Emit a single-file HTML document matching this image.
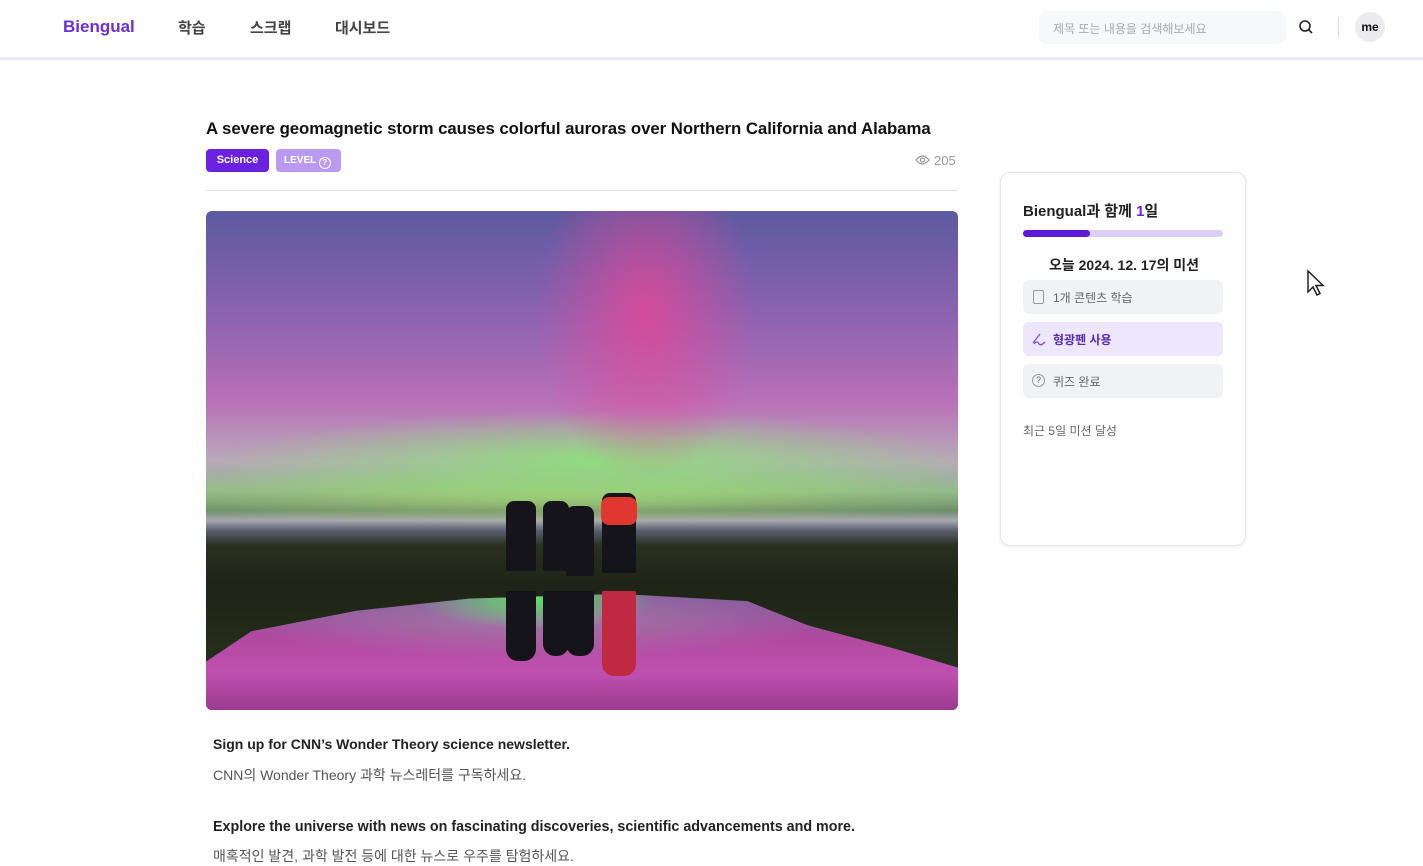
<!DOCTYPE html>
<html><head><meta charset="utf-8"><style>
*{margin:0;padding:0;box-sizing:border-box}
body{width:1423px;height:860px;overflow:hidden;background:#fff;font-family:"Liberation Sans","Noto Sans CJK KR",sans-serif;position:relative;color:#111}
.hdr{position:absolute;left:0;top:0;width:1423px;height:60px;background:#fff;border-bottom:3px solid #ece8f7}
.abs{position:absolute;white-space:nowrap}
.nav{font-size:15px;color:#444;font-weight:bold;top:17px}
.img{position:absolute;left:206px;top:211px;width:752px;height:499px;border-radius:6px;overflow:hidden;
background:
radial-gradient(ellipse 110px 170px at 440px 100px,rgba(230,70,150,.8),transparent),
radial-gradient(ellipse 380px 50px at 390px 250px,rgba(140,225,120,.9),transparent),
radial-gradient(ellipse 500px 30px at 350px 285px,rgba(170,210,110,.7),transparent),
linear-gradient(180deg,#5c5aa0 0%,#8a62b0 20%,#b870b8 38%,#b8a8b8 50%,#90b890 56%,#6a8a6a 60%,#a8a8b0 62%,#5a6070 64%,#2a3020 67%,#1e2416 75%,#2a3420 100%)}
.refl{position:absolute;left:0;top:378px;width:752px;height:121px;
background:radial-gradient(ellipse 120px 30px at 330px 10px,rgba(90,230,100,.95),transparent),radial-gradient(ellipse 300px 40px at 330px 30px,rgba(160,140,170,.7),transparent),linear-gradient(180deg,#7a5a9a,#b04aa0 40%,#c050b0 70%,#9a3a90);
clip-path:polygon(0 60%,6% 35%,20% 18%,35% 8%,55% 4%,72% 10%,80% 30%,92% 50%,100% 65%,100% 100%,0 100%)}
.p{position:absolute;background:#14141a;border-radius:8px 8px 2px 2px}
.card{position:absolute;left:1000px;top:172px;width:246px;height:374px;border:1px solid #e6e6ea;border-radius:10px;box-shadow:0 1px 4px rgba(0,0,0,.08);background:#fff}
.m{position:absolute;left:22px;width:200px;height:34px;border-radius:6px;background:#f1f2f4;font-size:12px;color:#666;padding:9px 0 0 30px}
</style></head><body>
<div class="hdr"></div>
<div class="abs" style="left:63px;top:17px;font-size:17px;font-weight:bold;color:#6a2fd8">Biengual</div>
<div class="abs nav" style="left:178px">학습</div>
<div class="abs nav" style="left:250px">스크랩</div>
<div class="abs nav" style="left:335px">대시보드</div>
<div class="abs" style="left:1039px;top:11px;width:247px;height:33px;background:#f7f8fa;border-radius:8px;font-size:12px;color:#aaa;padding:9px 0 0 14px">제목 또는 내용을 검색해보세요</div>
<svg class="abs" style="left:1298px;top:19px" width="16" height="16" viewBox="0 0 16 16"><circle cx="7" cy="7" r="5" fill="none" stroke="#222" stroke-width="1.6"/><path d="M11 11l3 3" stroke="#222" stroke-width="1.6"/></svg>
<div class="abs" style="left:1338px;top:17px;width:1px;height:20px;background:#ddd"></div>
<div class="abs" style="left:1355px;top:12px;width:30px;height:30px;border-radius:50%;background:#ececef;font-size:12px;font-weight:bold;text-align:center;line-height:30px">me</div>

<div class="abs" style="left:206px;top:119px;font-size:16.8px;font-weight:bold;letter-spacing:-0.05px">A severe geomagnetic storm causes colorful auroras over Northern California and Alabama</div>
<div class="abs" style="left:206px;top:149px;width:63px;height:23px;background:#6a22e0;border-radius:4px;color:#fff;font-size:11px;font-weight:bold;text-align:center;line-height:23px">Science</div>
<div class="abs" style="left:276px;top:149px;width:65px;height:23px;background:#b99af0;border-radius:4px;color:#fff;font-size:10px;font-weight:bold;line-height:23px;padding-left:8px">LEVEL <span style="display:inline-block;width:12px;height:12px;border:1.3px solid #fff;border-radius:50%;font-size:8px;line-height:10px;text-align:center;vertical-align:-2px">?</span></div>
<svg class="abs" style="left:915px;top:154px" width="15" height="12" viewBox="0 0 15 12"><path d="M1 6Q7.5-2 14 6Q7.5 14 1 6z" fill="none" stroke="#999" stroke-width="1.2"/><circle cx="7.5" cy="6" r="2" fill="none" stroke="#999" stroke-width="1.2"/></svg>
<div class="abs" style="left:934px;top:153px;font-size:13px;color:#999">205</div>
<div class="abs" style="left:206px;top:190px;width:752px;height:1px;background:#e2e2e2"></div>
<div class="img"><div class="refl"></div>
<div class="p" style="left:300px;top:290px;width:30px;height:70px"></div>
<div class="p" style="left:337px;top:290px;width:26px;height:70px"></div>
<div class="p" style="left:360px;top:295px;width:28px;height:70px"></div>
<div class="p" style="left:396px;top:282px;width:34px;height:80px"></div>
<div style="position:absolute;left:395px;top:286px;width:36px;height:28px;background:#e03830;border-radius:8px"></div>
<div class="p" style="left:300px;top:380px;width:30px;height:70px;border-radius:2px 2px 12px 12px"></div>
<div class="p" style="left:337px;top:380px;width:26px;height:65px;border-radius:2px 2px 12px 12px"></div>
<div class="p" style="left:360px;top:380px;width:28px;height:65px;border-radius:2px 2px 12px 12px"></div>
<div class="p" style="left:396px;top:380px;width:34px;height:85px;border-radius:2px 2px 12px 12px;background:#c02a40"></div>
</div>

<div class="card">
<div class="abs" style="left:22px;top:27px;font-size:15px;font-weight:bold;color:#222">Biengual과 함께 <span style="color:#6a22e0">1</span>일</div>
<div class="abs" style="left:22px;top:57px;width:200px;height:7px;border-radius:4px;background:#dccff8"><div style="width:67px;height:7px;border-radius:4px;background:#5a1ad8"></div></div>
<div class="abs" style="left:0;width:246px;text-align:center;top:82px;font-size:14px;font-weight:bold;color:#222">오늘 2024. 12. 17의 미션</div>
<div class="m" style="top:107px">1개 콘텐츠 학습<span style="position:absolute;left:10px;top:10px;width:11px;height:14px;border:1.3px solid #999;border-radius:2px"></span></div>
<div class="m" style="top:149px;background:#ede6fc;color:#5a2ab0;font-weight:bold">형광펜 사용<svg style="position:absolute;left:8px;top:9px" width="16" height="16" viewBox="0 0 16 16"><path d="M2 12L9 3M3 13q3-4 5 0q2 2 6-2" fill="none" stroke="#7a50d0" stroke-width="1.3"/></svg></div>
<div class="m" style="top:191px">퀴즈 완료<span style="position:absolute;left:9px;top:10px;width:13px;height:13px;border:1.3px solid #999;border-radius:50%;font-size:9px;text-align:center;line-height:11px">?</span></div>
<div class="abs" style="left:22px;top:249px;font-size:12px;color:#666">최근 5일 미션 달성</div>
</div>
<svg class="abs" style="left:1306px;top:269px" width="20" height="28" viewBox="0 0 20 28"><path d="M2 2v21l5-5 4 8 3-1.5-4-8h7z" fill="#fff" stroke="#222" stroke-width="1.5"/></svg>

<div class="abs" style="left:213px;top:736px;font-size:14px;font-weight:bold;color:#222">Sign up for CNN’s Wonder Theory science newsletter.</div>
<div class="abs" style="left:213px;top:765px;font-size:14px;color:#555">CNN의 Wonder Theory 과학 뉴스레터를 구독하세요.</div>
<div class="abs" style="left:213px;top:819px;font-size:14.3px;font-weight:bold;color:#222">Explore the universe with news on fascinating discoveries, scientific advancements and more.</div>
<div class="abs" style="left:213px;top:846px;font-size:14px;color:#555">매혹적인 발견, 과학 발전 등에 대한 뉴스로 우주를 탐험하세요.</div>
</body></html>
